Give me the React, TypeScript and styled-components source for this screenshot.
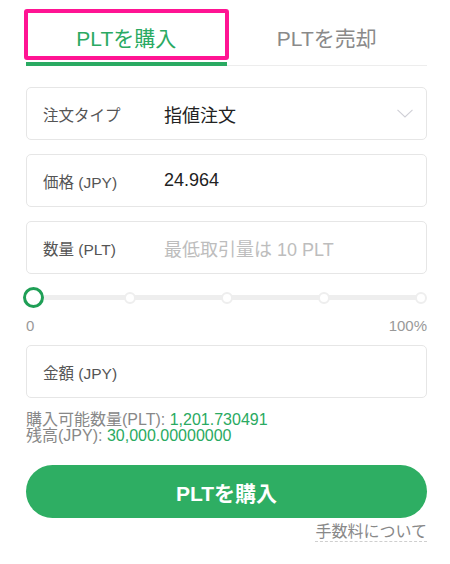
import { createGlobalStyle, styled } from 'styled-components';

const GlobalStyle = createGlobalStyle`
  body {
    margin: 0;
    background: #fff;
    font-family: "Liberation Sans", "Noto Sans CJK JP", sans-serif;
  }
`

const GREEN = '#2aaa62';

const Chevron = () => (
  <svg width="16" height="9" viewBox="0 0 16 9">
    <path d="M0.5 0.8 L8 8 L15.5 0.8" fill="none" stroke="#cfcfd6" strokeWidth="1.1" />
  </svg>
);

export default function App() {
  const steps = [0, 25, 50, 75, 100];
  return <Page>
    <GlobalStyle />
    <Tabs>
      <Tab $active>
        PLTを購入
        <Highlight />
      </Tab>
      <Tab>PLTを売却</Tab>
    </Tabs>

    <Form>
      <Field>
        <Label>注文タイプ</Label>
        <Value $size={18}>指値注文</Value>
        <Chevron />
      </Field>
      <Field>
        <Label>価格 (JPY)</Label>
        <Value $size={18}>24.964</Value>
      </Field>
      <Field>
        <Label>数量 (PLT)</Label>
        <Value $size={18} $placeholder>最低取引量は 10 PLT</Value>
      </Field>

      <Slider>
        {steps.map((s, i) => <Dot key={s} $active={i === 0} />)}
      </Slider>
      <SliderLabels>
        <span>0</span>
        <span>100%</span>
      </SliderLabels>

      <Field $gap={11}>
        <Label>金額 (JPY)</Label>
      </Field>
    </Form>

    <Info>
      <div>購入可能数量(PLT): <Num>1,201.730491</Num></div>
      <div>残高(JPY): <Num>30,000.00000000</Num></div>
    </Info>

    <BuyButton>PLTを購入</BuyButton>
    <FeeRow>
      <FeeLink>手数料について</FeeLink>
    </FeeRow>
  </Page>
}

const Page = styled.div`
  padding: 9px 23px 0 26px;
`

const Tabs = styled.div`
  display: flex;
  border-bottom: 1px solid #ededed;
`

const Tab = styled.div<{ $active?: boolean }>`
  position: relative;
  flex: 1;
  text-align: center;
  padding: 18px 0 11px;
  line-height: 24px;
  font-size: 21px;
  color: ${p => p.$active ? GREEN : '#8a8a8a'};
  border-bottom: 4px solid ${p => p.$active ? GREEN : 'transparent'};
  margin-bottom: -1px;
`

const Highlight = styled.div`
  position: absolute;
  top: 0;
  left: -2px;
  width: 205px;
  height: 51px;
  box-sizing: border-box;
  border: 4px solid #ff1493;
  border-radius: 3px;
  pointer-events: none;
`

const Form = styled.div`
  display: flex;
  flex-direction: column;
  margin-top: 21px;
`

const Field = styled.div<{ $gap?: number }>`
  display: flex;
  align-items: center;
  height: 53px;
  box-sizing: border-box;
  padding: 0 13px 0 16px;
  border: 1px solid #e6e6e6;
  border-radius: 5px;
  margin-top: ${p => p.$gap ?? 14}px;
  &:first-child {
    margin-top: 0;
  }
`

const Label = styled.div`
  width: 121px;
  flex-shrink: 0;
  font-size: 15.5px;
  color: #555;
`

const Value = styled.div<{ $size: number; $placeholder?: boolean }>`
  flex: 1;
  font-size: ${p => p.$size}px;
  color: ${p => p.$placeholder ? '#bdbdbd' : '#222'};
`

const Slider = styled.div`
  display: flex;
  justify-content: space-between;
  align-items: center;
  height: 21px;
  margin-top: 13px;
  padding-left: 1px;
  background: linear-gradient(#eeeeee, #eeeeee) center / calc(100% - 12px) 5px no-repeat;
`

const Dot = styled.div<{ $active?: boolean }>`
  width: ${p => p.$active ? 21 : 12}px;
  height: ${p => p.$active ? 21 : 12}px;
  margin: 0 ${p => p.$active ? -4.5 : 0}px;
  box-sizing: border-box;
  border-radius: 50%;
  background: #fff;
  border: ${p => p.$active ? `3px solid #1f9f56` : '2px solid #eeeeee'};
  position: relative;
  z-index: ${p => p.$active ? 1 : 0};
`

const SliderLabels = styled.div`
  display: flex;
  justify-content: space-between;
  margin-top: 10px;
  font-size: 15px;
  line-height: 16px;
  color: #999;
`

const Info = styled.div`
  margin-top: 14px;
  font-size: 16px;
  line-height: 16px;
  color: #888;
`

const Num = styled.span`
  color: ${GREEN};
`

const BuyButton = styled.button`
  display: block;
  width: 100%;
  height: 53px;
  margin-top: 21px;
  border: none;
  border-radius: 27px;
  background: #2eae63;
  color: #fff;
  font-family: inherit;
  font-weight: bold;
  font-size: 21px;
  cursor: pointer;
`

const FeeRow = styled.div`
  display: flex;
  justify-content: flex-end;
  margin-top: 5px;
`

const FeeLink = styled.span`
  font-size: 16px;
  line-height: 18px;
  color: #888;
  border-bottom: 1px dashed #cfcfcf;
`
